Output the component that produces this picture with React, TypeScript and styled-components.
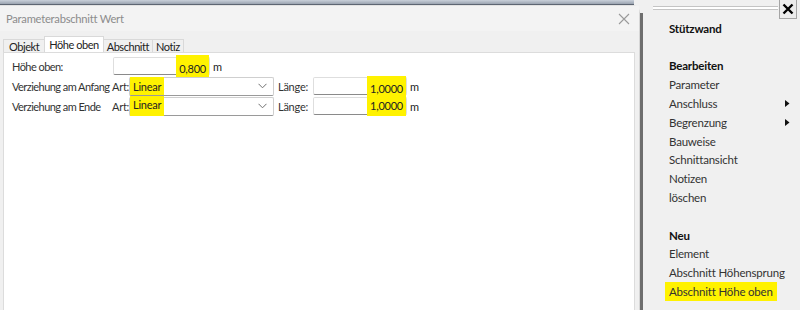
import styled, { createGlobalStyle } from "styled-components";

const GlobalStyle = createGlobalStyle`
    html, body {
        margin: 0;
        padding: 0;
        background: #f0f0f0;
    }
    body {
        font-family: Lato, "Noto Sans", Arial, sans-serif;
        font-size: 11px;
        letter-spacing: -0.25px;
        color: #333;
    }
`

const MENU = [
    { label: "Stützwand", bold: true },
    { label: "" },
    { label: "Bearbeiten", bold: true },
    { label: "Parameter" },
    { label: "Anschluss", sub: true },
    { label: "Begrenzung", sub: true },
    { label: "Bauweise" },
    { label: "Schnittansicht" },
    { label: "Notizen" },
    { label: "löschen" },
    { label: "" },
    { label: "Neu", bold: true },
    { label: "Element" },
    { label: "Abschnitt Höhensprung" },
    { label: "Abschnitt Höhe oben", marked: true },
]

const TABS = ["Objekt", "Höhe oben", "Abschnitt", "Notiz"]

const Chevron = () => (
    <svg width="9" height="6" viewBox="0 0 9 6">
        <path d="M0.5 0.8 L4.5 4.8 L8.5 0.8" fill="none" stroke="#707070" strokeWidth="1" />
    </svg>
)

const CloseGlyph = () => (
    <svg width="12" height="12" viewBox="0 0 12 12">
        <path d="M1 1 L11 11 M11 1 L1 11" stroke="#9a9a9a" strokeWidth="1.1" />
    </svg>
)

const PanelCloseGlyph = () => (
    <svg width="12" height="12" viewBox="0 0 12 12">
        <path d="M1.5 1.5 L10.5 10.5 M10.5 1.5 L1.5 10.5" stroke="#000" strokeWidth="2.4" />
    </svg>
)

const SubArrow = () => (
    <svg width="5" height="7" viewBox="0 0 5 7">
        <polygon points="0,0 4.5,3.5 0,7" fill="#111" />
    </svg>
)

const VerziehungRow = ({ label, low }: { label: string; low?: boolean }) => (
    <FormRow>
        <RowLabel $width={100}>{label}</RowLabel>
        <SmallLabel $width={17}>Art:</SmallLabel>
        <Combo>
            <Marker $top={low ? 2 : 3} $bottom={low ? 5 : 2}>Linear</Marker>
            <Chevron />
        </Combo>
        <SmallLabel $width={35} $padLeft={4}>Länge:</SmallLabel>
        <NumberField $width={94}>
            <Marker $top={low ? 2 : 6} $bottom={low ? 4 : 2} $right={3}>1,0000</Marker>
        </NumberField>
        <Unit>m</Unit>
    </FormRow>
)

export default function App() {
    return (
        <Page>
            <GlobalStyle />
            <Backdrop>
                <TopStrip />
                <DialogRow>
                    <Dialog>
                        <TitleBar>
                            <Title>Parameterabschnitt Wert</Title>
                            <CloseButton><CloseGlyph /></CloseButton>
                        </TitleBar>
                        <TabStrip>
                            {TABS.map(t => (
                                <Tab key={t} $active={t === "Höhe oben"}>{t}</Tab>
                            ))}
                        </TabStrip>
                        <TabPanel>
                            <FormRow>
                                <RowLabel $width={101}>Höhe oben:</RowLabel>
                                <NumberField $width={97}>
                                    <Marker $top={7} $bottom={3} $right={3}>0,800</Marker>
                                </NumberField>
                                <Unit>m</Unit>
                            </FormRow>
                            <VerziehungRow label="Verziehung am Anfang" />
                            <VerziehungRow label="Verziehung am Ende" low />
                        </TabPanel>
                    </Dialog>
                    <EdgeLine />
                </DialogRow>
            </Backdrop>
            <SidePanel>
                <PanelHeader>
                    <Grip />
                    <PanelClose><PanelCloseGlyph /></PanelClose>
                </PanelHeader>
                <Menu>
                    {MENU.map((m, i) => (
                        <MenuItem key={i} $bold={m.bold}>
                            {m.marked ? <MenuMarker>{m.label}</MenuMarker> : m.label}
                            {m.sub && <SubArrow />}
                        </MenuItem>
                    ))}
                </Menu>
            </SidePanel>
        </Page>
    )
}

const Page = styled.div`
    width: 800px;
    height: 310px;
    display: flex;
    overflow: hidden;
    background: #f0f0f0;
`

const Backdrop = styled.div`
    width: 645px;
    flex-shrink: 0;
    display: flex;
    flex-direction: column;
`

const TopStrip = styled.div`
    height: 4px;
    width: 634px;
    background: linear-gradient(#c9d0da, #9aa3b0);
    border-bottom: 1px solid #5d6572;
`

const DialogRow = styled.div`
    flex: 1;
    display: flex;
    margin-top: -5px;
`

const Dialog = styled.div`
    width: 640px;
    margin-top: 5px;
    display: flex;
    flex-direction: column;
    background: #f0f0f0;
    border-top-right-radius: 8px;
    border-right: 1px solid #d6d6d6;
    border-top: 1px solid #e2e2e2;
    box-sizing: border-box;
`

const EdgeLine = styled.div`
    width: 3px;
    margin-top: 13px;
    background: #6e6e6e;
`

const TitleBar = styled.div`
    height: 25px;
    display: flex;
    align-items: center;
    justify-content: space-between;
    padding: 0 8px 0 6px;
    background: #f3f3f3;
`

const Title = styled.div`
    font-size: 11.2px;
    color: #8c8c8c;
`

const CloseButton = styled.div`
    display: flex;
    align-items: center;
    margin-right: 1px;
`

const TabStrip = styled.div`
    height: 21px;
    display: flex;
    align-items: flex-end;
    padding-left: 3px;
`

const Tab = styled.div<{ $active?: boolean }>`
    height: ${p => (p.$active ? 16 : 13)}px;
    padding: 0 ${p => (p.$active ? 4 : 3)}px;
    display: flex;
    align-items: center;
    box-sizing: border-box;
    background: ${p => (p.$active ? "#fff" : "#f0f0f0")};
    border: 1px solid #d9d9d9;
    border-bottom: none;
    margin-right: -1px;
    position: relative;
    z-index: ${p => (p.$active ? 2 : 1)};
    letter-spacing: -0.45px;
    color: #222;

    &:first-child {
        padding: 0 5px;
    }
`

const TabPanel = styled.div`
    flex: 1;
    margin: 0 4px 0 3px;
    padding: 3px 0 0 8px;
    background: #fff;
    border: 1px solid #dcdcdc;
    border-bottom: none;
`

const FormRow = styled.div`
    height: 20px;
    display: flex;
    align-items: center;
`

const RowLabel = styled.div<{ $width: number }>`
    width: ${p => p.$width}px;
    flex-shrink: 0;
    white-space: nowrap;
    letter-spacing: -0.55px;
`

const SmallLabel = styled.div<{ $width: number; $padLeft?: number }>`
    width: ${p => p.$width}px;
    padding-left: ${p => p.$padLeft ?? 0}px;
    flex-shrink: 0;
    white-space: nowrap;
`

const NumberField = styled.div<{ $width: number }>`
    width: ${p => p.$width}px;
    height: 18px;
    box-sizing: border-box;
    display: flex;
    align-items: center;
    justify-content: flex-end;
    background: #fff;
    border: 1px solid #dedede;
    border-bottom-color: #8a8a8a;
    border-radius: 2px;
    color: #222;
`

const Combo = styled.div`
    width: 145px;
    height: 19px;
    box-sizing: border-box;
    display: flex;
    align-items: center;
    justify-content: space-between;
    padding-right: 6px;
    background: #fff;
    border: 1px solid #cfcfcf;
    border-bottom-color: #9a9a9a;
    border-radius: 2px;
    color: #222;
`

const Marker = styled.span<{ $top: number; $bottom: number; $right?: number }>`
    background: #fff200;
    padding: ${p => p.$top}px ${p => p.$right ?? 3}px ${p => p.$bottom}px 3px;
`

const Unit = styled.div`
    margin-left: 3px;
    color: #222;
`

const SidePanel = styled.div`
    width: 155px;
    min-width: 0;
    display: flex;
    flex-direction: column;
    background: #f0f0f0;
`

const PanelHeader = styled.div`
    height: 19px;
    display: flex;
    align-items: flex-start;
    padding-left: 8px;
    padding-right: 3px;
`

const Grip = styled.div`
    flex: 1;
    height: 2px;
    margin-top: 6px;
    border-top: 1px solid #c4c4c4;
    border-bottom: 1px solid #c4c4c4;
    background: #fff;
`

const PanelClose = styled.div`
    width: 18px;
    height: 19px;
    box-sizing: border-box;
    margin-left: 1px;
    display: flex;
    align-items: center;
    justify-content: center;
    background: #ececec;
    border: 1px solid #a5a5a5;
    border-top: none;
`

const Menu = styled.div`
    padding-left: 24px;
    padding-right: 10px;
`

const MenuItem = styled.div<{ $bold?: boolean }>`
    height: 18.8px;
    display: flex;
    align-items: center;
    justify-content: space-between;
    white-space: nowrap;
    font-size: 11.5px;
    letter-spacing: -0.2px;
    font-weight: ${p => (p.$bold ? "bold" : "normal")};
    color: ${p => (p.$bold ? "#111" : "#333")};
`

const MenuMarker = styled.span`
    background: #fff200;
    padding: 3px 4px;
    margin-left: -4px;
`
